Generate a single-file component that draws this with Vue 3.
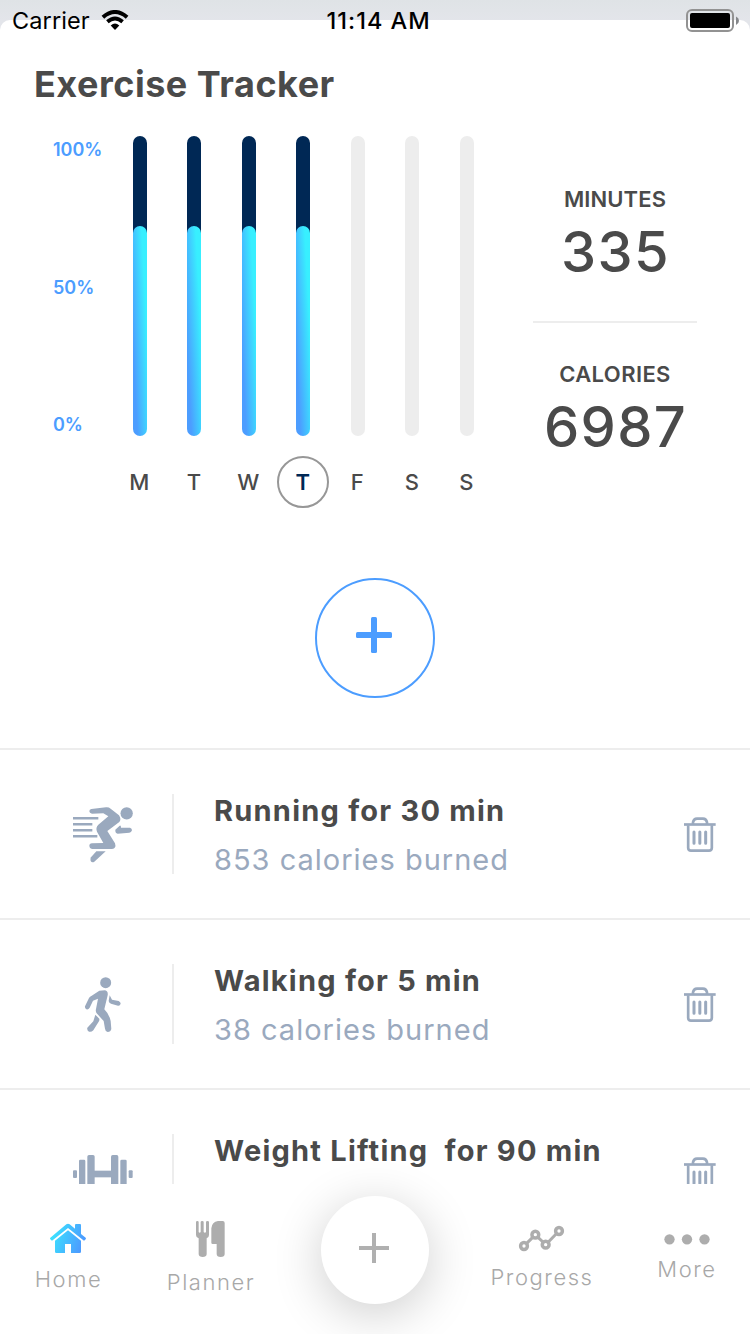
<script setup>
const days = [
  { label: 'M', done: 70 },
  { label: 'T', done: 70 },
  { label: 'W', done: 70 },
  { label: 'T', done: 70, today: true },
  { label: 'F', done: null },
  { label: 'S', done: null },
  { label: 'S', done: null },
]

const activities = [
  { icon: 'run', title: 'Running for 30 min', note: '853 calories burned' },
  { icon: 'walk', title: 'Walking for 5 min', note: '38 calories burned' },
  { icon: 'lift', title: 'Weight Lifting\u00a0 for 90 min', note: '' },
]
</script>

<template>
  <div class="screen">
    <div class="status">
      <span class="carrier">Carrier</span>
      <svg class="wifi" viewBox="0 0 28 20" width="28" height="20">
        <path d="M1.9 7.2 Q14 -3.2 26.1 7.2" fill="none" stroke="#000" stroke-width="4" />
        <path d="M6.4 11.8 Q14 5.2 21.6 11.8" fill="none" stroke="#000" stroke-width="3.8" />
        <path d="M9.7 15.4 Q14 11.8 18.3 15.4 L14 20 Z" fill="#000" />
      </svg>
      <span class="clock">11:14 AM</span>
      <svg class="battery" viewBox="0 0 54 24" width="54" height="24">
        <rect x="1" y="1" width="46" height="21" rx="5" fill="none" stroke="#929292" stroke-width="2" />
        <rect x="4" y="4" width="40" height="15" rx="2" fill="#000" />
        <path d="M50 7.5 Q53 9 53 11.7 Q53 14.5 50 16 Z" fill="#85878a" />
      </svg>
    </div>

    <main class="sheet">
      <h1 class="title">Exercise Tracker</h1>

      <section class="summary">
        <div class="scale">
          <span>100%</span><span>50%</span><span>0%</span>
        </div>
        <div class="chart">
          <div v-for="(d, i) in days" :key="i" class="day">
            <div class="bar" :class="{ active: d.done !== null }">
              <div v-if="d.done !== null" class="fill" :style="{ height: d.done + '%' }"></div>
            </div>
            <div class="label" :class="{ today: d.today }">{{ d.label }}</div>
          </div>
        </div>
        <div class="stats">
          <div class="stat">
            <div class="name">MINUTES</div>
            <div class="value">335</div>
          </div>
          <div class="stat">
            <div class="name wide">CALORIES</div>
            <div class="value">6987</div>
          </div>
        </div>
      </section>

      <button class="add">
        <svg viewBox="0 0 36 36" width="36" height="36">
          <rect x="0" y="15" width="36" height="6" rx="1.5" />
          <rect x="15" y="0" width="6" height="36" rx="1.5" />
        </svg>
      </button>

      <ul class="list">
        <li v-for="a in activities" :key="a.title" class="row">
          <div class="pic">
            <svg v-if="a.icon === 'run'" viewBox="66 75 186 171" width="62" height="57">
              <circle cx="230" cy="97" r="18.5" />
              <path d="M124 84 L168 79 Q176 78 182 83 L207 103 Q215 115 208 123 L172 150 L195 187 Q200 203 186 204 L126 204 Q118 202 118 195 Q118 187 126 187 L160 186 L141 152 Q136 140 145 131 L175 106 L160 97 L126 98 Q118 97 118 91 Q118 85 124 84Z" />
              <path d="M196 146 L209 134 Q213 132 213 140 L240 140 Q246 142 246 148 Q244 155 238 155 L203 158 Q195 156 196 146Z" />
              <path d="M139 211 L167 211 L133 242 Q126 246 122 240 Q120 234 123 229Z" />
              <path d="M69 112H145M69 130H127M69 148H127M69 166H142" class="line" stroke-width="7.5" />
            </svg>
            <svg v-else-if="a.icon === 'walk'" viewBox="102 75 114 171" width="38" height="57">
              <circle cx="167" cy="95" r="16.5" />
              <path d="M148 119 L165 118 Q175 120 173 133 L163 175 Q178 190 182 210 L184 234 Q182 243 173 243 Q166 242 165 233 L161 210 L140 187 Q136 181 138 174 L144 143 L129 149 L119 170 Q115 177 109 175 Q104 172 105 166 L117 141 Q120 137 124 135Z" />
              <path d="M179 133 L186 146 L206 150 Q212 153 212 158 Q210 165 204 164 L183 158 Q176 155 176 150Z" />
              <path d="M136 191 L148 203 Q149 208 146 212 L130 238 Q124 244 117 242 Q110 238 112 230 L130 211Z" />
            </svg>
            <svg v-else viewBox="216 101 186 120" width="62" height="40">
              <rect x="219" y="150" width="12" height="23" rx="3" />
              <rect x="237" y="118" width="19" height="87" rx="4" />
              <rect x="262" y="104" width="22" height="115" rx="5" />
              <rect x="280" y="151" width="57" height="20" />
              <rect x="333" y="104" width="22" height="115" rx="5" />
              <rect x="361" y="118" width="19" height="87" rx="4" />
              <rect x="386" y="150" width="12" height="23" rx="3" />
            </svg>
          </div>
          <div class="text">
            <div class="what">{{ a.title }}</div>
            <div class="note">{{ a.note }}</div>
          </div>
          <svg class="trash" viewBox="99 78 102 111" width="34" height="37">
            <path d="M102 103.5H197" stroke-width="8" />
            <path d="M129 102V97Q131 86 141 86H159Q169 86 171 97V102" stroke-width="8" />
            <path d="M114.5 106V174Q115 182 123 182H177Q185 182 185.5 174V106" stroke-width="8" />
            <path d="M132 126V160M149.5 126V160M167 126V160" stroke-width="9" stroke-linecap="round" />
          </svg>
        </li>
      </ul>
    </main>

    <nav class="tabs">
      <div class="tab home">
        <svg viewBox="147 309 114 93" width="38" height="31">
          <defs>
            <linearGradient id="sky" gradientUnits="userSpaceOnUse" x1="158" y1="345" x2="243" y2="375">
              <stop offset="0" stop-color="#3be0ff" />
              <stop offset="1" stop-color="#4c9dff" />
            </linearGradient>
          </defs>
          <g fill="url(#sky)">
            <path d="M225 334V315Q225 312 228 312H240Q243 312 243 315V342L257 353Q259 355 257 358L254 361Q252 363 250 361L204 324L158 361Q156 363 154 361L151 358Q149 355 151 353L199 313Q204 310 209 313L225 326Z" />
            <path d="M204 331L243 362V395Q243 399 239 399H213V372H195V399H169Q165 399 165 395V362Z" />
          </g>
        </svg>
        <span>Home</span>
      </div>
      <div class="tab planner">
        <svg viewBox="585 300 93 114" width="31" height="38">
          <path d="M588 306Q588 303 592 303Q596 303 596 306V336Q599 340 602 336V306Q602 303 606.5 303Q611 303 611 306V336Q615 340 618 336V306Q618 303 622.5 303Q627 303 627 306V345Q627 353 620 355V403Q619 411 608 411Q597 411 596 403V355Q588 353 588 345Z" />
          <path d="M654 303H668Q674 303 674 309V402Q674 411 662 411Q650 411 650 402V372H638Q634 372 634 368V325Q636 305 654 303Z" />
        </svg>
        <span>Planner</span>
      </div>
      <button class="fab">
        <svg viewBox="0 0 30 30" width="30" height="30">
          <path d="M15 0V30M0 15H30" />
        </svg>
      </button>
      <div class="tab progress">
        <svg viewBox="204 315 141 81" width="47" height="27">
          <g fill="none" stroke="#adadad">
            <path d="M230 370L248 352M264 352L279 366M295 366L319 341" stroke-width="9" />
            <g stroke-width="10.5">
              <circle cx="222" cy="378" r="10.2" />
              <circle cx="256" cy="344" r="10.2" />
              <circle cx="287" cy="374" r="10.2" />
              <circle cx="327" cy="333" r="10.2" />
            </g>
          </g>
        </svg>
        <span>Progress</span>
      </div>
      <div class="tab more">
        <svg viewBox="640.5 341 138 33" width="46" height="11">
          <circle cx="657" cy="357" r="15.5" />
          <circle cx="709.5" cy="357" r="15.5" />
          <circle cx="762" cy="357" r="15.5" />
        </svg>
        <span>More</span>
      </div>
    </nav>
  </div>
</template>

<style>
html,
body {
  margin: 0;
  overflow: hidden;
}
</style>

<style scoped>
.screen {
  position: relative;
  width: 750px;
  height: 1334px;
  display: flex;
  flex-direction: column;
  overflow: hidden;
  background: linear-gradient(#dfe3e6, #e3e5ea 20px);
  font-family: Inter, 'Liberation Sans', sans-serif;
  color: #4a4a4a;
  white-space: nowrap;
}
svg {
  display: block;
  flex: none;
}
button {
  padding: 0;
}

/* The status bar floats above the sheet. */
.status {
  position: absolute;
  z-index: 2;
  top: 0;
  left: 0;
  width: 750px;
  height: 40px;
  line-height: 42px;
  display: grid;
  grid-template-columns: 89px 237.5px 359.5px 64px;
  color: #000;
}
.carrier {
  padding-left: 12px;
  font-size: 23.5px;
  letter-spacing: 0.1px;
}
.wifi {
  margin: 10px 0 0 12px;
}
.clock {
  font-size: 23.5px;
  font-weight: 500;
  letter-spacing: 1px;
}
.battery {
  margin-top: 9px;
}

.sheet {
  box-sizing: border-box;
  margin-top: 20px;
  height: 1164px;
  padding-top: 40px;
  border-radius: 10px 10px 0 0;
  background: #fff;
  display: flex;
  flex-direction: column;
  align-items: center;
  overflow: hidden;
  flex: none;
}
.title {
  align-self: flex-start;
  margin: 0 0 0 34px;
  font-size: 36px;
  line-height: 48px;
  font-weight: 700;
  letter-spacing: 0.5px;
}

.summary {
  width: 750px;
  height: 400px;
  margin-top: 28px;
  display: flex;
  flex: none;
}
.scale {
  width: 59.6px;
  height: 299px;
  margin-left: 53px;
  padding-top: 4px;
  box-sizing: border-box;
  display: flex;
  flex-direction: column;
  justify-content: space-between;
  color: #4c9dff;
  font-size: 18px;
  line-height: 20px;
  font-weight: 600;
}
.chart {
  display: flex;
  width: 381.5px;
}
.day {
  width: 54.5px;
  display: flex;
  flex-direction: column;
  align-items: center;
}
.bar {
  width: 14px;
  height: 300px;
  border-radius: 7px;
  background: #ededed;
  display: flex;
  align-items: flex-end;
}
.bar.active {
  background: linear-gradient(#002855 50%, transparent 50%);
}
.fill {
  width: 14px;
  border-radius: 7px;
  background: linear-gradient(87deg, #4c9dff 18%, #38efff 78%);
}
.label {
  box-sizing: border-box;
  width: 52px;
  height: 52px;
  margin-top: 20px;
  padding-right: 1px;
  border: 2px solid transparent;
  border-radius: 50%;
  font-size: 22px;
  line-height: 48px;
  font-weight: 500;
  text-align: center;
}
.label.today {
  border-color: #979797;
  color: #002855;
  font-weight: 600;
}
.stats {
  width: 164px;
  margin-left: 38.9px;
  text-align: center;
}
.stat {
  box-sizing: border-box;
}
.stat:first-child {
  height: 187px;
  padding-top: 50px;
  border-bottom: 2px solid #ededed;
}
.stat:last-child {
  padding-top: 38px;
}
.name {
  font-size: 22px;
  line-height: 26px;
  font-weight: 600;
  letter-spacing: 0.1px;
}
.name.wide {
  letter-spacing: 0.4px;
}
.value {
  margin: 10px -1px 0 0;
  font-size: 56px;
  line-height: 60px;
  font-weight: 550;
  letter-spacing: 1.3px;
}

.add {
  width: 120px;
  height: 120px;
  margin-top: 42px;
  border: 2px solid #4c9dff;
  border-radius: 50%;
  background: none;
  display: flex;
  align-items: center;
  justify-content: center;
  flex: none;
}
.add svg {
  margin: -7px 2px 0 0;
  fill: #4c9dff;
}

.list {
  width: 750px;
  margin: 50px 0 0;
  padding: 0;
  list-style: none;
}
.row {
  box-sizing: border-box;
  height: 170px;
  padding: 44px 33px 44px 34px;
  border-top: 2px solid #ededed;
  display: flex;
  align-items: flex-start;
}
.pic {
  box-sizing: border-box;
  width: 140px;
  height: 80px;
  border-right: 2px solid #ededed;
  display: flex;
  align-items: center;
  justify-content: center;
  fill: #9aa9be;
}
.line {
  stroke: #9aa9be;
}
.text {
  flex: 1;
  padding-left: 40px;
}
.what {
  font-size: 29px;
  line-height: 34px;
  font-weight: 700;
  letter-spacing: 1.23px;
}
.note {
  margin-top: 15px;
  font-size: 29px;
  line-height: 34px;
  color: #9aa9be;
  letter-spacing: 1px;
}
.trash {
  margin-top: 22px;
  fill: none;
  stroke: #9aa9be;
}

.tabs {
  position: relative;
  height: 150px;
  display: grid;
  grid-template-columns: 136px 149px 180px 153px 137px;
  background: #fff;
  flex: none;
}
.tab {
  display: flex;
  flex-direction: column;
  align-items: center;
  fill: #adadad;
}
.tab span {
  margin-right: -1px;
  font-size: 22px;
  line-height: 24px;
  font-weight: 300;
  letter-spacing: 1.55px;
  color: #a8a8a8;
}
.home {
  padding-top: 39px;
}
.home span {
  margin-top: 13px;
}
.planner {
  padding-top: 36px;
}
.planner span {
  margin-top: 12px;
}
.progress {
  padding-top: 41px;
}
.progress span {
  margin-top: 13px;
}
.more {
  padding-top: 50px;
}
.more span {
  margin-top: 12px;
}
.fab {
  width: 108px;
  height: 108px;
  margin: 12px auto 0;
  border: 0;
  border-radius: 50%;
  background: #fff;
  box-shadow: 0 10px 50px rgba(0, 0, 0, 0.2);
  display: flex;
  align-items: center;
  justify-content: center;
}
.fab svg {
  margin: -5px 2px 0 0;
  fill: none;
  stroke: #b0b0b0;
  stroke-width: 4;
}
</style>
